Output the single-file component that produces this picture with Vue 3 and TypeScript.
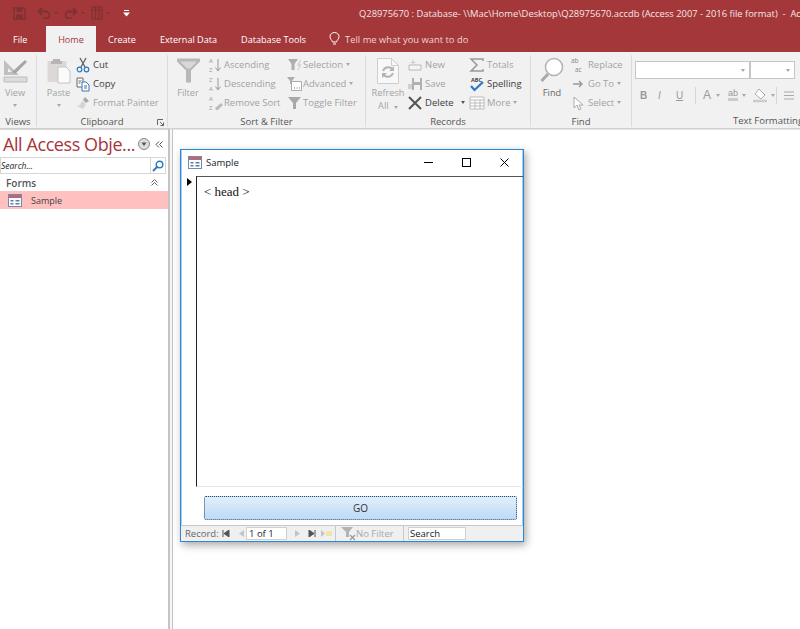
<script setup lang="ts">
const tabs = ['Create', 'External Data', 'Database Tools']
</script>

<template>
  <div class="app">
    <header class="titlebar">
      <div class="qat">
        <svg class="q-save" width="13" height="13" viewBox="0 0 14 14"><path d="M1 1h10l2 2v10H1z" fill="none" stroke="#7e3133" stroke-width="1.6"/><path d="M4 1h6v4H4zM3.500 8h7v5h-7z" fill="#7e3133"/></svg>
        <svg class="q-undo" width="14" height="12" viewBox="0 0 14 12"><path d="M5 1 1.500 4.500 5 8M2 4.500h7a3.500 3.500 0 0 1 0 7H6" fill="none" stroke="#7e3133" stroke-width="1.800"/></svg>
        <i class="q-caret"></i>
        <svg class="q-redo" width="14" height="12" viewBox="0 0 14 12"><path d="M9 1l3.500 3.500L9 8M12 4.500H5a3.500 3.500 0 0 0 0 7h3" fill="none" stroke="#7e3133" stroke-width="1.800"/></svg>
        <i class="q-caret"></i>
        <svg class="q-view" width="12" height="14" viewBox="0 0 12 14"><path d="M1 1h10v12H1zM1 4h10M4.500 1v12M8 1v12" fill="none" stroke="#7e3133" stroke-width="1.200"/></svg>
        <i class="q-caret"></i>
        <svg class="q-more" width="7" height="7" viewBox="0 0 7 7"><path d="M1 0h5v1H1zM0 2.500h7L3.500 6.500z" fill="#fff"/></svg>
      </div>
      <div class="doc-title">Q28975670 : Database- \\Mac\Home\Desktop\Q28975670.accdb (Access 2007 - 2016 file format)&nbsp; -&nbsp; Access</div>
    </header>

    <nav class="tabs">
      <span class="tab file">File</span>
      <span class="tab home">Home</span>
      <span v-for="t in tabs" :key="t" class="tab">{{ t }}</span>
      <span class="tell">
        <svg width="11" height="14" viewBox="0 0 11 14"><path d="M3.500 10C3 8 1 7 1 4.500a4.500 4 0 0 1 9 0C10 7 8 8 7.500 10zM4 12h3" fill="none" stroke="#fff" stroke-width="1"/></svg>
        Tell me what you want to do
      </span>
    </nav>

    <section class="ribbon">
      <div class="group g-views">
        <div class="cols">
          <div class="big dis">
            <svg width="26" height="26" viewBox="0 0 26 26"><path d="M2 3v15h15z M6 11v4h4z" fill="#c0c0c0" fill-rule="evenodd"/><path d="M10 15 23 3l2 2-12 12z" fill="#a6a6a6"/><path d="M2 20h23v5H2z" fill="#dcdcdc" stroke="#bcbcbc"/></svg>
            <span class="big-label">View</span><i class="caret"></i>
          </div>
        </div>
        <div class="glabel">Views</div>
      </div>

      <div class="group g-clip">
        <div class="cols">
          <div class="big dis w-paste">
            <svg width="24" height="26" viewBox="0 0 24 26"><rect x="0.500" y="3" width="19" height="21" rx="1" fill="#dcd8d8"/><path d="M6 3V1h7v2h2v3H4V3z" fill="#b8b4b4"/><path d="M11 9h8l4 4v12H11z" fill="#fbfbfb" stroke="#c4c4c4"/></svg>
            <span class="big-label">Paste</span><i class="caret"></i>
          </div>
          <div class="col">
            <div class="row on">
              <svg class="ic" viewBox="0 0 16 16"><path d="M5 1l5 9M11 1l-5 9" stroke="#666" stroke-width="1.400" fill="none"/><circle cx="4.500" cy="12.500" r="2.300" fill="none" stroke="#2b79c2" stroke-width="1.200"/><circle cx="11.500" cy="12.500" r="2.300" fill="none" stroke="#2b79c2" stroke-width="1.200"/></svg>Cut
            </div>
            <div class="row on">
              <svg class="ic" viewBox="0 0 16 16"><path d="M2 2h6v9H2z" fill="#fff" stroke="#666"/><path d="M7 6h4l3 3v6H7z" fill="#fff" stroke="#2b79c2"/><path d="M3.500 5h3M3.500 7h2M9 10h3M9 12h3" stroke="#666"/></svg>Copy
            </div>
            <div class="row dis">
              <svg class="ic" viewBox="0 0 16 16"><path d="M10 2l4 4-3 2-3-3z" fill="#a8a8a8"/><path d="M7 6l4 3-3 5-6-3 3-1z" fill="#d4d4d4"/></svg><span class="tight">Format Painter</span>
            </div>
          </div>
        </div>
        <div class="glabel">Clipboard</div>
        <svg class="launcher" width="7" height="7" viewBox="0 0 7 7"><path d="M.500 6V.500H6M3 3l3.500 3.500M6.500 3.500v3h-3" fill="none" stroke="#666"/></svg>
      </div>

      <div class="group g-sort">
        <div class="cols">
          <div class="big dis w-filter">
            <svg width="23" height="25" viewBox="0 0 23 25"><path d="M0 0h23v3l-9 9v12l-5 0V12L0 3z" fill="#b8b8b8"/><path d="M3 3h17l-7 7h-3z" fill="#d8d8d8"/></svg>
            <span class="big-label">Filter</span>
          </div>
          <div class="col w-sort">
            <div class="row dis"><svg class="ic" viewBox="0 0 16 16"><text x="2" y="6" class="mini">A</text><text x="2" y="15" class="mini">Z</text><path d="M11 2v11M8.500 10.500 11 14l2.500-3.500" fill="none" stroke="#999"/></svg>Ascending</div>
            <div class="row dis"><svg class="ic" viewBox="0 0 16 16"><text x="2" y="6" class="mini">Z</text><text x="2" y="15" class="mini">A</text><path d="M11 2v11M8.500 10.500 11 14l2.500-3.500" fill="none" stroke="#999"/></svg>Descending</div>
            <div class="row dis"><svg class="ic" viewBox="0 0 16 16"><text x="2" y="6" class="mini">A</text><text x="2" y="15" class="mini">Z</text><path d="M8 13l6-5 2 2-5 5H9z" fill="#bbb"/></svg>Remove Sort</div>
          </div>
          <div class="col">
            <div class="row dis"><svg class="ic" viewBox="0 0 16 16"><path d="M2 2h10L8.500 7v6h-3V7z" fill="#aeaeae"/><path d="M14.500 3l-2.500 5h2.500l-2.500 5" fill="none" stroke="#d2d2d2" stroke-width="1.300"/></svg>Selection<i class="caret in"></i></div>
            <div class="row dis"><svg class="ic" viewBox="0 0 16 16"><path d="M1 1h8L6 5v3H4V5z" fill="#aeaeae"/><path d="M5.500 5.500h10v9h-10z" fill="#fff" stroke="#aaa"/><path d="M8 12h1M10.500 12h1M13 12h1" stroke="#777"/></svg>Advanced<i class="caret in"></i></div>
            <div class="row dis"><svg class="ic" viewBox="0 0 16 16"><path d="M2 2h13L10 8v6H7V8z" fill="#a8a8a8"/></svg>Toggle Filter</div>
          </div>
        </div>
        <div class="glabel">Sort &amp; Filter</div>
      </div>

      <div class="group g-rec">
        <div class="cols">
          <div class="big dis w-refresh">
            <svg width="22" height="26" viewBox="0 0 22 26"><path d="M.500.500h14l7 7v18H.500z" fill="#f8f8f8" stroke="#cfcfcf"/><path d="M14.500.500v7h7" fill="none" stroke="#cfcfcf"/><path d="M6 13a5.500 5.500 0 0 1 10-1M16 15a5.500 5.500 0 0 1-10 1" fill="none" stroke="#b4b4b4" stroke-width="2"/><path d="M17 8v5h-5zM5 20v-5h5z" fill="#b4b4b4"/></svg>
            <span class="big-label">Refresh</span>
            <span class="big-label all">All <i class="caret in"></i></span>
          </div>
          <div class="col w-new">
            <div class="row dis"><svg class="ic" viewBox="0 0 16 16"><path d="M2 8h12v5H2z" fill="#f4f4f4" stroke="#b8b8b8"/><path d="M5 5l1-3 1 3 3 .5-3 .5-1 2-1-2-3-.5z" fill="#d0d0d0"/></svg>New</div>
            <div class="row dis"><svg class="ic" viewBox="0 0 16 16"><path d="M1 8h4v5H1z" fill="#d0d0d0"/><path d="M5 2h10v12H5z" fill="#b0b0b0"/><path d="M7 2h6v4H7zM7 9h6v5H7z" fill="#f1f1f1"/></svg>Save</div>
            <div class="row on"><svg class="ic" viewBox="0 0 16 16"><path d="M2 2l12 12M14 2 2 14" stroke="#555" stroke-width="2"/></svg>Delete<i class="caret in dark"></i></div>
          </div>
          <div class="col">
            <div class="row dis"><svg class="ic" viewBox="0 0 16 16"><path d="M14 4V2H2l6 6-6 6h12v-2" fill="none" stroke="#999" stroke-width="1.500"/></svg>Totals</div>
            <div class="row on"><svg class="ic" viewBox="0 0 16 16"><text x="2" y="5.500" class="abc">ABC</text><path d="M2 10l3.500 4L14 6" fill="none" stroke="#2b79c2" stroke-width="2.200"/></svg>Spelling</div>
            <div class="row dis"><svg class="ic" viewBox="0 0 16 16"><path d="M1 2h14v12H1zM1 5h14M1 8h14M1 11h14M6 5v9M11 5v9" fill="#fff" stroke="#bbb"/></svg>More<i class="caret in"></i></div>
          </div>
        </div>
        <div class="glabel">Records</div>
      </div>

      <div class="group g-find">
        <div class="cols">
          <div class="big w-find">
            <svg width="24" height="26" viewBox="0 0 24 26"><circle cx="14" cy="10" r="8.500" fill="#fff" stroke="#b4b4b4" stroke-width="1.600"/><path d="M8 17 1.500 24" stroke="#a8a8a8" stroke-width="3"/></svg>
            <span class="big-label">Find</span>
          </div>
          <div class="col">
            <div class="row dis"><svg class="ic" viewBox="0 0 16 16"><text x="1" y="6" class="sm">ab</text><text x="5" y="15" class="sm">ac</text></svg>Replace</div>
            <div class="row dis"><svg class="ic" viewBox="0 0 16 16"><path d="M3 8h9M9 5l3 3-3 3" fill="none" stroke="#999" stroke-width="1.400"/></svg>Go To<i class="caret in"></i></div>
            <div class="row dis"><svg class="ic" viewBox="0 0 16 16"><path d="M4 2v11l3-3 2 5 2-1-2-4h4z" fill="#fff" stroke="#aaa"/></svg>Select<i class="caret in"></i></div>
          </div>
        </div>
        <div class="glabel">Find</div>
      </div>

      <div class="group g-text">
        <div class="fmt">
          <div class="combos">
            <div class="combo c1"><i class="caret"></i></div>
            <div class="combo c2"><i class="caret"></i></div>
          </div>
          <div class="fmt-row">
            <b class="f">B</b><em class="f">I</em><u class="f">U</u>
            <span class="vsep"></span>
            <span class="fa">A</span><i class="caret"></i>
            <span class="fb">ab</span><i class="caret"></i>
            <svg class="fc" width="14" height="15" viewBox="0 0 14 15"><path d="M6 1l6 6-4 4-6-5z" fill="#fff" stroke="#aaa"/><path d="M0 13h14" stroke="#ccc" stroke-width="2.500"/></svg><i class="caret"></i>
            <span class="vsep"></span>
            <svg width="10" height="9" viewBox="0 0 10 9"><path d="M0 1h10M0 4.500h10M0 8h10" stroke="#aaa"/></svg>
          </div>
        </div>
        <div class="glabel">Text Formatting</div>
      </div>
    </section>

    <main class="body">
      <aside class="nav">
        <div class="nav-head">
          <span class="nav-title">All Access Obje...</span>
          <svg class="nav-circle" width="12" height="12" viewBox="0 0 12 12"><circle cx="6" cy="6" r="5.500" fill="#ddd" stroke="#888"/><path d="M3.500 4.500h5L6 8z" fill="#555"/></svg>
          <svg class="nav-coll" width="8" height="7" viewBox="0 0 8 7"><path d="M4 .5 1 3.500l3 3M7.500 .5l-3 3 3 3" fill="none" stroke="#555"/></svg>
        </div>
        <div class="nav-search">
          <span class="search-text">Search...</span>
          <span class="search-btn"><svg width="12" height="12" viewBox="0 0 12 12"><circle cx="7.500" cy="4.500" r="3.300" fill="none" stroke="#2b79c2" stroke-width="1.400"/><path d="M5 7 1 11" stroke="#2b79c2" stroke-width="2"/></svg></span>
        </div>
        <div class="nav-cat"><span>Forms</span>
          <svg width="7" height="7" viewBox="0 0 7 7"><path d="M.5 3.500l3-3 3 3M.5 6.500l3-3 3 3" fill="none" stroke="#666"/></svg>
        </div>
        <div class="nav-item">
          <svg class="form-ic" width="14" height="13" viewBox="0 0 14 13"><rect x=".5" y=".5" width="13" height="12" fill="#fff" stroke="#7788a8"/><path d="M1 1h12v3H1z" fill="#b8687a"/><path d="M2.500 6h3v1.500h-3zM7.500 6h4v1.500h-4zM2.500 9h3v1.500h-3zM7.500 9h4v1.500h-4z" fill="#5a7db5"/></svg>
          <span>Sample</span>
        </div>
      </aside>
      <div class="splitter"></div>

      <div class="canvas">
        <div class="win">
          <div class="win-title">
            <svg class="win-ic" width="14" height="13" viewBox="0 0 14 13"><rect x=".5" y=".5" width="13" height="12" fill="#fff" stroke="#7788a8"/><path d="M1 1h12v3H1z" fill="#b8687a"/><path d="M2.500 6h3v1.500h-3zM7.500 6h4v1.500h-4zM2.500 9h3v1.500h-3zM7.500 9h4v1.500h-4z" fill="#5a7db5"/></svg>
            <span class="win-name">Sample</span>
            <svg class="w-min" width="9" height="9" viewBox="0 0 9 9"><path d="M0 4.500h9" stroke="#000"/></svg>
            <svg class="w-max" width="9" height="9" viewBox="0 0 9 9"><rect x=".5" y=".5" width="8" height="8" fill="none" stroke="#000"/></svg>
            <svg class="w-close" width="9" height="9" viewBox="0 0 9 9"><path d="M.5.500l8 8M8.500.500l-8 8" stroke="#000"/></svg>
          </div>
          <div class="detail">
            <div class="selector"><i class="arrow"></i></div>
            <div class="detail-body">&lt; head &gt;</div>
          </div>
          <div class="form-footer">
            <button class="go">GO</button>
          </div>
          <div class="recbar">
            <span class="rec-label">Record:</span>
            <svg class="rn first" width="8" height="7" viewBox="0 0 8 7"><path d="M1 0v7M7 0v7L2 3.500z" stroke="#555" fill="#555" stroke-width="1"/></svg>
            <svg class="rn prev" width="5" height="7" viewBox="0 0 5 7"><path d="M5 0v7L0 3.500z" fill="#c4c4c4"/></svg>
            <span class="rec-input">1 of 1</span>
            <svg class="rn next" width="5" height="7" viewBox="0 0 5 7"><path d="M0 0v7l5-3.500z" fill="#c4c4c4"/></svg>
            <svg class="rn last" width="8" height="7" viewBox="0 0 8 7"><path d="M7 0v7M1 0v7l5-3.500z" stroke="#555" fill="#555" stroke-width="1"/></svg>
            <svg class="rn newr" width="11" height="7" viewBox="0 0 11 7"><path d="M0 0v7l4-3.500z" fill="#c4c4c4"/><path d="M5 1h6v5H5z" fill="#f2e3a8"/></svg>
            <span class="rec-sep"></span>
            <svg class="rec-filter" width="15" height="15" viewBox="0 0 15 15"><path d="M0 1h12L8 6v5H5V6z" fill="#b4b4b4"/><path d="M9 9l5 5M14 9l-5 5" stroke="#999" stroke-width="1.200"/></svg>
            <span class="rec-nofilter">No Filter</span>
            <span class="rec-sep s2"></span>
            <span class="rec-search">Search</span>
          </div>
        </div>
      </div>
    </main>
  </div>
</template>

<style scoped>
.app { width: 800px; height: 629px; overflow: hidden; display: flex; flex-direction: column; background: #fff; font-family: "Open Sans", "Noto Sans", sans-serif; font-size: 10px; color: #444; }

.titlebar { height: 26px; background: #a4373a; display: flex; align-items: center; flex: none; color: #fff; }
.qat { width: 359px; flex: none; display: flex; align-items: center; padding-left: 13px; box-sizing: border-box; }
.q-undo { margin-left: 11px; }
.q-redo { margin-left: 6px; }
.q-view { margin-left: 6px; }
.q-more { margin-left: 13px; }
.q-caret { width: 0; height: 0; margin-left: 3px; border: 2.5px solid transparent; border-top-color: #7e3133; border-bottom: 0; }
.doc-title { white-space: nowrap; font-size: 9.4px; color: #f6e6e6; }

.tabs { height: 26px; background: #a4373a; display: flex; align-items: stretch; flex: none; color: #fff; font-size: 9.1px; }
.tab { display: flex; align-items: center; padding: 0 12px; white-space: nowrap; }
.tab.file { padding: 0 13px; width: 46px; box-sizing: border-box; }
.tab.home { background: #f1f1f1; color: #a4373a; width: 50px; justify-content: center; padding: 0; }
.tell { display: flex; align-items: center; gap: 5px; margin-left: 11px; color: #ecd6d6; font-size: 9.4px; }

.ribbon { height: 77px; background: #f1f1f1; border-bottom: 1px solid #d0d0d0; display: flex; flex: none; padding-top: 3px; box-sizing: border-box; }
.group { position: relative; display: flex; flex-direction: column; flex: none; border-right: 1px solid #dcdcdc; height: 72px; box-sizing: border-box; }
.g-views { width: 37px; }
.g-clip { width: 131px; }
.g-sort { width: 198px; }
.g-rec { width: 165px; }
.g-find { width: 101px; }
.g-text { width: 272px; border-right: 0; }
.cols { display: flex; height: 57px; flex: none; }
.glabel { text-align: center; font-size: 9.5px; color: #555; line-height: 12px; margin-top: 4px; white-space: nowrap; }
.launcher { position: absolute; right: 3px; bottom: 1px; }

.big { display: flex; flex-direction: column; align-items: center; flex: none; font-size: 9.2px; }
.big svg { height: 26px; flex: none; }
.big-label { line-height: 13px; margin-top: 2px; white-space: nowrap; }
.big-label.all { margin-top: 0; }
.g-views .big { width: 30px; padding-top: 2px; }
.g-views .big-label { margin-top: 3px; }
.w-paste { width: 31px; margin: 0 1px 0 6px; padding-top: 3px; }
.w-filter { width: 36px; margin-left: 2px; padding-top: 3px; }
.w-refresh { width: 36px; margin-left: 4px; padding-top: 3px; }
.w-find { width: 36px; margin-left: 3px; padding-top: 2px; color: #666; }
.w-find .big-label { margin-top: 3px; }
.big .caret { margin-top: 5px; }
.dis { color: #a3a3a3; }
.on { color: #3c3c3c; }

.col { display: flex; flex-direction: column; flex: none; }
.row { height: 19px; display: flex; align-items: center; white-space: nowrap; font-size: 9.5px; }
.tight { letter-spacing: -0.05px; }
.ic { width: 16px; height: 16px; margin-right: 2px; flex: none; }
.g-sort .ic { margin-right: 1px; }
.w-sort { width: 79px; margin-left: 1px; }
.w-new { width: 62px; margin-left: 1px; }
.mini { font-size: 6px; fill: #999; }
.abc { font-size: 5.5px; font-weight: 700; fill: #444; }
.sm { font-size: 6.5px; fill: #888; }

.caret { display: inline-block; width: 0; height: 0; border: 2.5px solid transparent; border-top: 3px solid #a8a8a8; border-bottom: 0; }
.caret.in { margin-left: 3px; }
.caret.dark { border-top-color: #555; margin-left: 7px; }

.fmt { height: 57px; display: flex; flex-direction: column; padding: 6px 0 0 3px; }
.combos { display: flex; }
.combo { height: 18px; box-sizing: border-box; background: #fff; border: 1px solid #c6c6c6; display: flex; align-items: center; justify-content: flex-end; padding-right: 4px; }
.c1 { width: 115px; }
.c2 { width: 45px; }
.fmt-row { display: flex; align-items: center; margin-top: 6px; height: 20px; font-family: "Liberation Sans", sans-serif; font-size: 10px; color: #9a9a9a; padding-left: 5px; }
.f { width: 18px; flex: none; font-size: 10px; }
.vsep { width: 1px; height: 17px; background: #d8d8d8; margin: 0 7px 0 1px; flex: none; }
.fa { font-size: 12px; margin-right: 5px; }
.fb { font-size: 9px; margin: 0 4px 0 8px; border-bottom: 3px solid #ccc; line-height: 9px; }
.fc { margin: 0 4px 0 7px; }

.body { flex: 1; display: flex; min-height: 0; }
.nav { width: 168px; flex: none; background: #fff; }
.nav-head { height: 28px; display: flex; align-items: center; box-sizing: border-box; border-top: 1px solid #d8d8d8; padding-top: 1px; }
.nav-title { font-size: 18px; color: #a4373a; margin-left: 3px; width: 135px; white-space: nowrap; letter-spacing: -0.42px; line-height: 26px; }
.nav-coll { margin-left: 5px; }
.nav-search { height: 17px; width: 166px; box-sizing: border-box; border: 1px solid #d6d6d6; display: flex; align-items: center; justify-content: space-between; }
.search-text { font-size: 8.5px; font-style: italic; color: #222; }
.search-btn { width: 14px; height: 15px; border-left: 1px solid #d6d6d6; display: flex; align-items: center; justify-content: center; }
.nav-cat { height: 17px; display: flex; align-items: center; justify-content: space-between; padding: 0 10px 0 6px; font-size: 10px; font-weight: 600; color: #555; }
.nav-item { height: 18px; background: #ffc0c0; display: flex; align-items: center; padding-left: 8px; font-size: 9px; color: #444; }
.form-ic { margin-right: 9px; }

.splitter { width: 5px; flex: none; box-sizing: border-box; border-left: 2px solid #c4c4c4; border-right: 1px solid #c4c4c4; background: #f6f6f6; }

.canvas { flex: 1; position: relative; background: #fff; min-width: 0; border-top: 1px solid #e4e4e4; }
.win { position: absolute; left: 7px; top: 19px; width: 344px; height: 393px; box-sizing: border-box; background: #fff; border: 1px solid #2b88d8; box-shadow: 2px 3px 8px rgba(0,0,0,.35), inset 1px 0 0 #a6cdf0, inset -1px 0 0 #a6cdf0; display: flex; flex-direction: column; }
.win-title { height: 26px; flex: none; display: flex; align-items: center; padding: 0 0 2px 7px; box-sizing: border-box; }
.win-name { font-size: 9.5px; color: #222; margin-left: 4px; width: 218px; }
.w-max { margin-left: 29px; }
.w-close { margin-left: 29px; }
.detail { flex: 1; display: flex; min-height: 0; }
.selector { width: 15px; flex: none; position: relative; }
.arrow { position: absolute; left: 6px; top: 2px; width: 0; height: 0; border: 4px solid transparent; border-left: 5px solid #000; border-right: 0; }
.detail-body { flex: 1; border-left: 1px solid #222; border-top: 1px solid #555; border-bottom: 1px solid #e6e6e6; font-family: "Liberation Serif", serif; font-size: 13px; color: #111; padding: 7px 0 0 7px; }
.form-footer { height: 38px; flex: none; padding: 9px 6px 0 23px; box-sizing: border-box; }
.go { display: block; width: 100%; height: 24px; border: 1px dotted #26456b; border-radius: 2px; background: linear-gradient(#e2effb, #bcdaf7); font-family: inherit; font-size: 10px; color: #333; padding: 0; }
.recbar { height: 16px; flex: none; background: #f0f0f0; border-top: 1px solid #c8c8c8; display: flex; align-items: center; padding-left: 4px; font-size: 9.5px; color: #666; box-sizing: border-box; }
.rec-label { width: 37px; flex: none; }
.rn { flex: none; }
.prev { margin-left: 9px; }
.rec-input { width: 41px; height: 13px; box-sizing: border-box; margin-left: 2px; background: #fff; border: 1px solid #d0d0d0; color: #222; line-height: 11px; padding-left: 2px; font-size: 9.5px; }
.next { margin-left: 8px; }
.last { margin-left: 8px; }
.newr { margin-left: 5px; }
.rec-sep { width: 1px; height: 15px; background: #c8c8c8; margin-left: 3px; flex: none; }
.rec-filter { margin-left: 5px; flex: none; }
.rec-nofilter { color: #a8a8a8; width: 44px; white-space: nowrap; }
.rec-search { margin-left: 4px; width: 58px; height: 13px; box-sizing: border-box; background: #fff; border: 1px solid #d0d0d0; color: #222; line-height: 11px; padding-left: 1px; }
</style>
